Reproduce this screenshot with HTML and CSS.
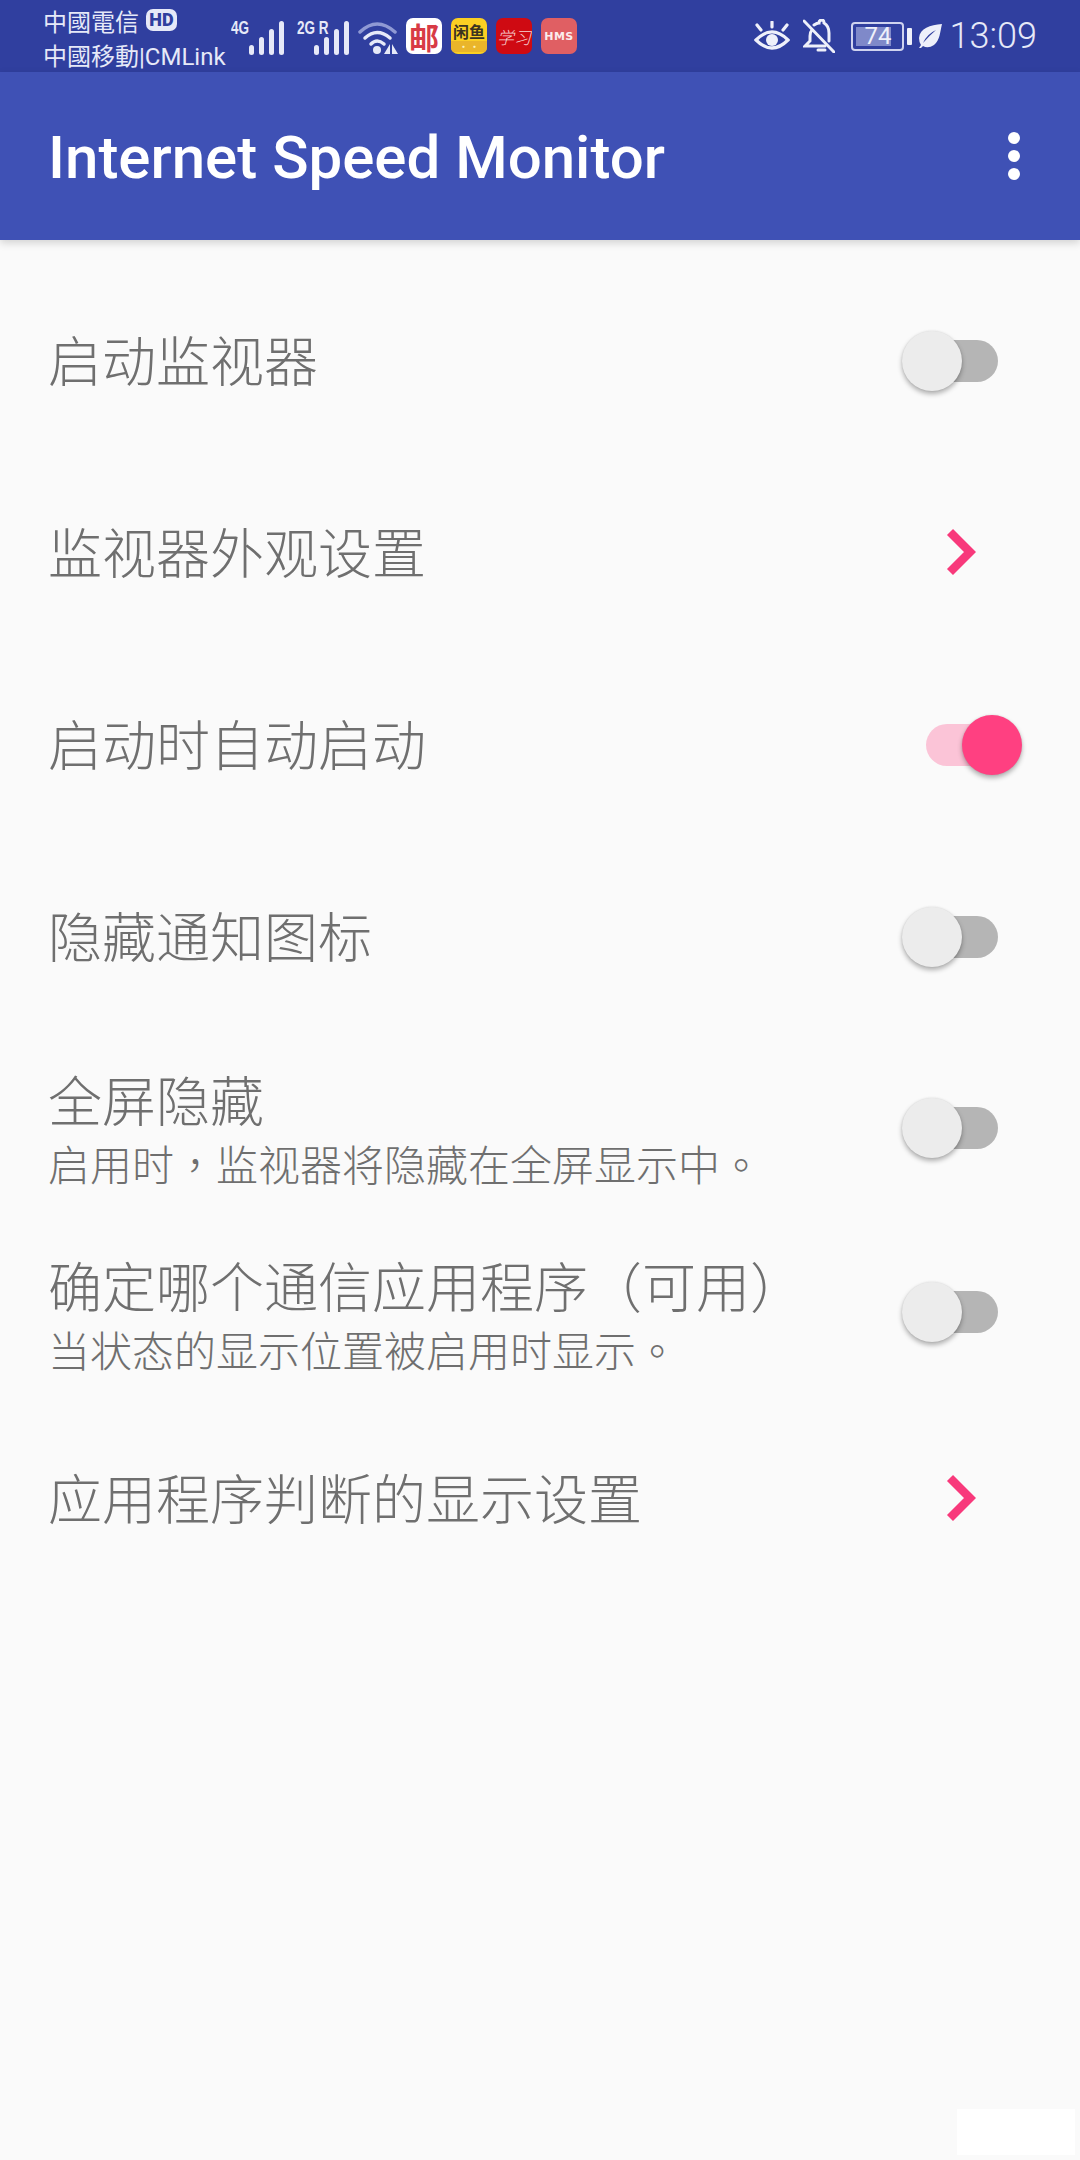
FILE: index.html
```html
<!DOCTYPE html>
<html lang="zh-CN">
    <head>
        <meta charset="utf-8"/>
        <title>Internet Speed Monitor</title>
        <link rel="stylesheet" href="styles.css">
    </head>
    <body>
        <!-- Status bar -->
        <div class="statusBar">
            <div class="carriers">
                <div class="carrier">中國電信<span class="hdBadge">HD</span></div>
                <div class="carrier">中國移動|CMLink</div>
            </div>
            <div class="signal signalFirst">
                <span class="netType">4G</span>
                <div class="bars"><i></i><i></i><i></i><i></i></div>
            </div>
            <div class="signal signalSecond">
                <span class="netType">2G R</span>
                <div class="bars"><i></i><i></i><i></i><i></i></div>
            </div>
            <svg class="wifi" width="40" height="34" viewBox="0 0 40 34">
                <path d="M2 11 Q19 -5 37 11" fill="none" stroke="#8f99d4" stroke-width="3.5" stroke-linecap="round"/>
                <path d="M7 17 Q19 6 32 17" fill="none" stroke="#e6e9f8" stroke-width="3.5" stroke-linecap="round"/>
                <path d="M13 23 Q19 17 26 23" fill="none" stroke="#e6e9f8" stroke-width="3.5" stroke-linecap="round"/>
                <circle cx="19" cy="29" r="4" fill="#e6e9f8"/>
                <path d="M32 23 V33 H26 Z M34 23 V33 H40 Z" fill="#e6e9f8"/>
            </svg>
            <div class="appIcons">
                <div class="appIcon iconPost">邮</div>
                <div class="appIcon iconFish"><span>闲鱼</span><small>• •</small></div>
                <div class="appIcon iconStudy">学习</div>
                <div class="appIcon iconHms">HMS</div>
            </div>
            <div class="statusRight">
                <svg width="36" height="31" viewBox="0 0 36 31" fill="none" stroke="#eef0fa" stroke-width="3.2" stroke-linecap="round">
                    <path d="M2 19 Q18 3 34 19 Q18 35 2 19 Z"/>
                    <circle cx="18" cy="19" r="6" fill="#eef0fa" stroke="none"/>
                    <path d="M18 1 V6 M3 4 L7 9 M33 4 L29 9"/>
                </svg>
                <svg class="bellOff" width="32" height="34" viewBox="0 0 32 34" fill="none" stroke="#eef0fa" stroke-width="3" stroke-linecap="round">
                    <path d="M9 11 Q7 13 7 17 V22 L2 27 H22"/>
                    <path d="M11 6 Q14 4 16 4 Q16 1 19 1 Q21 1 21 4 Q26 7 26 14 V22"/>
                    <path d="M15 31 H22"/>
                    <path d="M1 2 L31 33"/>
                </svg>
                <div class="batteryWrap">
                    <div class="battery">
                        <div class="batteryFill"></div>
                        <span class="batteryLevel">74</span>
                    </div>
                    <div class="batteryNub"></div>
                </div>
                <svg class="leaf" width="24" height="24" viewBox="0 0 24 24"><path d="M24 0 C12 1 2 4 1 14 Q1 18 3 21 L1 24 L3 24 L5 22 Q10 25 16 21 C22 16 22 8 24 0 Z M5 19 Q9 10 18 6 Q11 12 5 19 Z" fill="#eef0fa" fill-rule="evenodd"/></svg>
                <span class="clock">13:09</span>
            </div>
        </div>

        <!-- Top banner -->
        <div class="appBar">
            <h1>Internet Speed Monitor</h1>
            <div class="moreMenu"><i></i><i></i><i></i></div>
        </div>

        <!-- Settings list -->
        <div class="settings">
            <div class="row">
                <div class="rowText"><div class="rowTitle">启动监视器</div></div>
                <div class="control"><div class="switch"></div></div>
            </div>
            <div class="row">
                <div class="rowText"><div class="rowTitle">监视器外观设置</div></div>
                <div class="control"><svg class="chevron" width="30" height="50" viewBox="0 0 30 50"><path d="M4 5 L24 25 L4 45" fill="none" stroke="#f8397b" stroke-width="8.5"/></svg></div>
            </div>
            <div class="row">
                <div class="rowText"><div class="rowTitle">启动时自动启动</div></div>
                <div class="control"><div class="switch on"></div></div>
            </div>
            <div class="row">
                <div class="rowText"><div class="rowTitle">隐藏通知图标</div></div>
                <div class="control"><div class="switch"></div></div>
            </div>
            <div class="row rowFull">
                <div class="rowText">
                    <div class="rowTitle">全屏隐藏</div>
                    <div class="rowSub">启用时<span class="punct" lang="zh-Hant">，</span>监视器将隐藏在全屏显示中<span class="punct" lang="zh-Hant">。</span></div>
                </div>
                <div class="control"><div class="switch"></div></div>
            </div>
            <div class="row rowApp">
                <div class="rowText">
                    <div class="rowTitle">确定哪个通信应用程序<span class="punct" lang="zh-Hant">（</span>可用<span class="punct" lang="zh-Hant">）</span></div>
                    <div class="rowSub">当状态的显示位置被启用时显示<span class="punct" lang="zh-Hant">。</span></div>
                </div>
                <div class="control"><div class="switch"></div></div>
            </div>
            <div class="row rowLast">
                <div class="rowText"><div class="rowTitle">应用程序判断的显示设置</div></div>
                <div class="control"><svg class="chevron" width="30" height="50" viewBox="0 0 30 50"><path d="M4 5 L24 25 L4 45" fill="none" stroke="#f8397b" stroke-width="8.5"/></svg></div>
            </div>
        </div>

        <div class="cornerPatch"></div>
    </body>
</html>
```

FILE: styles.css
```css
html, body {
    margin: 0;
    padding: 0;
    height: 2160px;
    overflow: hidden;
}

body {
    position: relative;
    background-color: #fafafa;
    font-family: "Noto Sans CJK SC", "Noto Sans", sans-serif;
}

/* Status bar */
.statusBar {
    display: flex;
    align-items: center;
    height: 72px;
    padding: 0 43px 0 43px;
    box-sizing: border-box;
    background-color: #303f9f;
    color: #e6e9f8;
}

.carriers {
    width: 188px;
    flex: none;
    margin-top: 2px;
}

.carrier {
    display: flex;
    align-items: center;
    height: 34px;
    font-family: Roboto, "Noto Sans CJK TC", sans-serif;
    font-size: 24px;
    white-space: nowrap;
}

.hdBadge {
    margin-left: 7px;
    width: 31px;
    height: 22px;
    line-height: 22px;
    border-radius: 7px;
    background-color: #e6e9f8;
    color: #303f9f;
    font-size: 18px;
    font-weight: 900;
    text-align: center;
}

.signal {
    position: relative;
    display: flex;
    justify-content: flex-end;
    flex: none;
    height: 34px;
    margin-top: 4px;
}

.signalFirst {
    width: 53px;
}

.signalSecond {
    width: 52px;
    margin-left: 13px;
}

.bars {
    display: flex;
    align-items: flex-end;
    gap: 5px;
}

.bars i {
    display: block;
    width: 5px;
    border-radius: 3px;
    background-color: #e6e9f8;
}

.bars i:nth-child(1) {
    height: 10px;
}

.bars i:nth-child(2) {
    height: 18px;
}

.bars i:nth-child(3) {
    height: 26px;
}

.bars i:nth-child(4) {
    height: 34px;
}

/* the network label sits over the corner of the bars */
.netType {
    position: absolute;
    left: 0;
    top: -2px;
    font-family: "Liberation Sans", sans-serif;
    font-size: 18px;
    font-weight: 700;
    line-height: 18px;
    white-space: nowrap;
    transform: scaleX(0.75);
    transform-origin: left center;
}

.wifi {
    flex: none;
    margin: 4px 0 0 9px;
}

.appIcons {
    display: flex;
    flex: none;
    gap: 9px;
    margin-left: 8px;
}

.appIcon {
    display: flex;
    align-items: center;
    justify-content: center;
    width: 36px;
    height: 36px;
    border-radius: 7px;
    overflow: hidden;
    white-space: nowrap;
}

.iconPost {
    background-color: #ffffff;
    color: #d83a45;
    font-size: 30px;
    font-weight: 700;
}

.iconFish {
    flex-direction: column;
    background-color: #fbcf23;
    color: #3b3320;
    font-size: 16px;
    font-weight: 700;
    line-height: 20px;
}

.iconFish small {
    align-self: stretch;
    height: 11px;
    line-height: 11px;
    background-color: #eab52a;
    color: #fdf2b8;
    font-size: 9px;
    text-align: center;
}

.iconStudy {
    background-color: #cf0a12;
    color: #f6d4d4;
    font-size: 17px;
    font-weight: 300;
    font-style: italic;
}

.iconHms {
    background-color: #e05f63;
    color: #fbeced;
    font-family: "DejaVu Sans", sans-serif;
    font-size: 11px;
    font-weight: 700;
    letter-spacing: 0.5px;
}

.statusRight {
    display: flex;
    align-items: center;
    flex: none;
    margin-left: auto;
}

.bellOff {
    margin-left: 13px;
}

.batteryWrap {
    display: flex;
    align-items: center;
    margin-left: 16px;
}

.battery {
    position: relative;
    display: flex;
    width: 53px;
    height: 29px;
    padding: 3px;
    box-sizing: border-box;
    border: 2px solid #cfd3ef;
    border-radius: 4px;
}

.batteryFill {
    width: 35px;
    background-color: #7f89c9;
}

.batteryLevel {
    position: absolute;
    left: 12px;
    top: -3px;
    color: #eef0fa;
    font-family: Roboto, sans-serif;
    font-size: 24px;
    line-height: 31px;
}

.batteryNub {
    width: 5px;
    height: 17px;
    margin-left: 3px;
    border-radius: 1px;
    background-color: #eef0fa;
}

.leaf {
    margin-left: 6px;
}

.clock {
    margin-left: 8px;
    color: #e6e9f8;
    font-family: Roboto, sans-serif;
    font-size: 36px;
    font-weight: 300;
}

/* App bar */
.appBar {
    display: flex;
    align-items: center;
    justify-content: space-between;
    height: 168px;
    padding: 0 60px 0 48px;
    box-sizing: border-box;
    background-color: #3f51b5;
    box-shadow: 0 3px 8px rgba(0, 0, 0, 0.16);
}

h1 {
    margin: 0;
    padding-top: 3px;
    color: #ffffff;
    font-family: Roboto, sans-serif;
    font-size: 60px;
    font-weight: 500;
}

.moreMenu {
    display: flex;
    flex-direction: column;
    gap: 6px;
}

.moreMenu i {
    display: block;
    width: 12px;
    height: 12px;
    border-radius: 50%;
    background-color: #ffffff;
}

/* Settings rows */
.settings {
    padding-top: 25px;
}

.row {
    display: flex;
    align-items: center;
    justify-content: space-between;
    height: 192px;
    padding: 0 58px 0 48px;
    box-sizing: border-box;
}

.rowFull {
    height: 188px;
    align-items: flex-start;
}

.rowApp {
    height: 180px;
    align-items: flex-start;
}

.rowLast {
    height: 196px;
}

.rowText {
    padding-bottom: 5px;
    color: #6f6f6f;
}

.rowTitle {
    font-size: 54px;
    font-weight: 300;
    line-height: 64px;
}

.rowSub {
    font-size: 42px;
    font-weight: 300;
    line-height: 64px;
}

/* full-width punctuation sits centred in its box, as in the traditional forms */
.punct {
    font-family: "Noto Sans CJK TC", sans-serif;
}

.rowFull .rowText {
    padding-top: 34px;
}

.rowFull .control {
    margin-top: 74px;
}

.rowApp .rowText {
    padding-top: 32px;
}

.rowApp .control {
    margin-top: 70px;
}

.control {
    display: flex;
    justify-content: center;
    flex: none;
    width: 120px;
}

.chevron {
    margin: -2px 2px 0 0;
}

/* Switch: the thumb lies over the track */
.switch {
    position: relative;
    width: 72px;
    height: 42px;
    border-radius: 21px;
    background-color: #b5b5b5;
}

.switch::after {
    content: "";
    position: absolute;
    left: -24px;
    top: -9px;
    width: 60px;
    height: 60px;
    border-radius: 50%;
    background-color: #ececec;
    box-shadow: 0 3px 5px rgba(0, 0, 0, 0.3), 0 0 2px rgba(0, 0, 0, 0.1);
}

.switch.on {
    background-color: #fbc4d7;
}

.switch.on::after {
    left: 36px;
    background-color: #ff4081;
}

.cornerPatch {
    position: absolute;
    left: 957px;
    top: 2109px;
    width: 118px;
    height: 46px;
    background-color: #ffffff;
}
```
